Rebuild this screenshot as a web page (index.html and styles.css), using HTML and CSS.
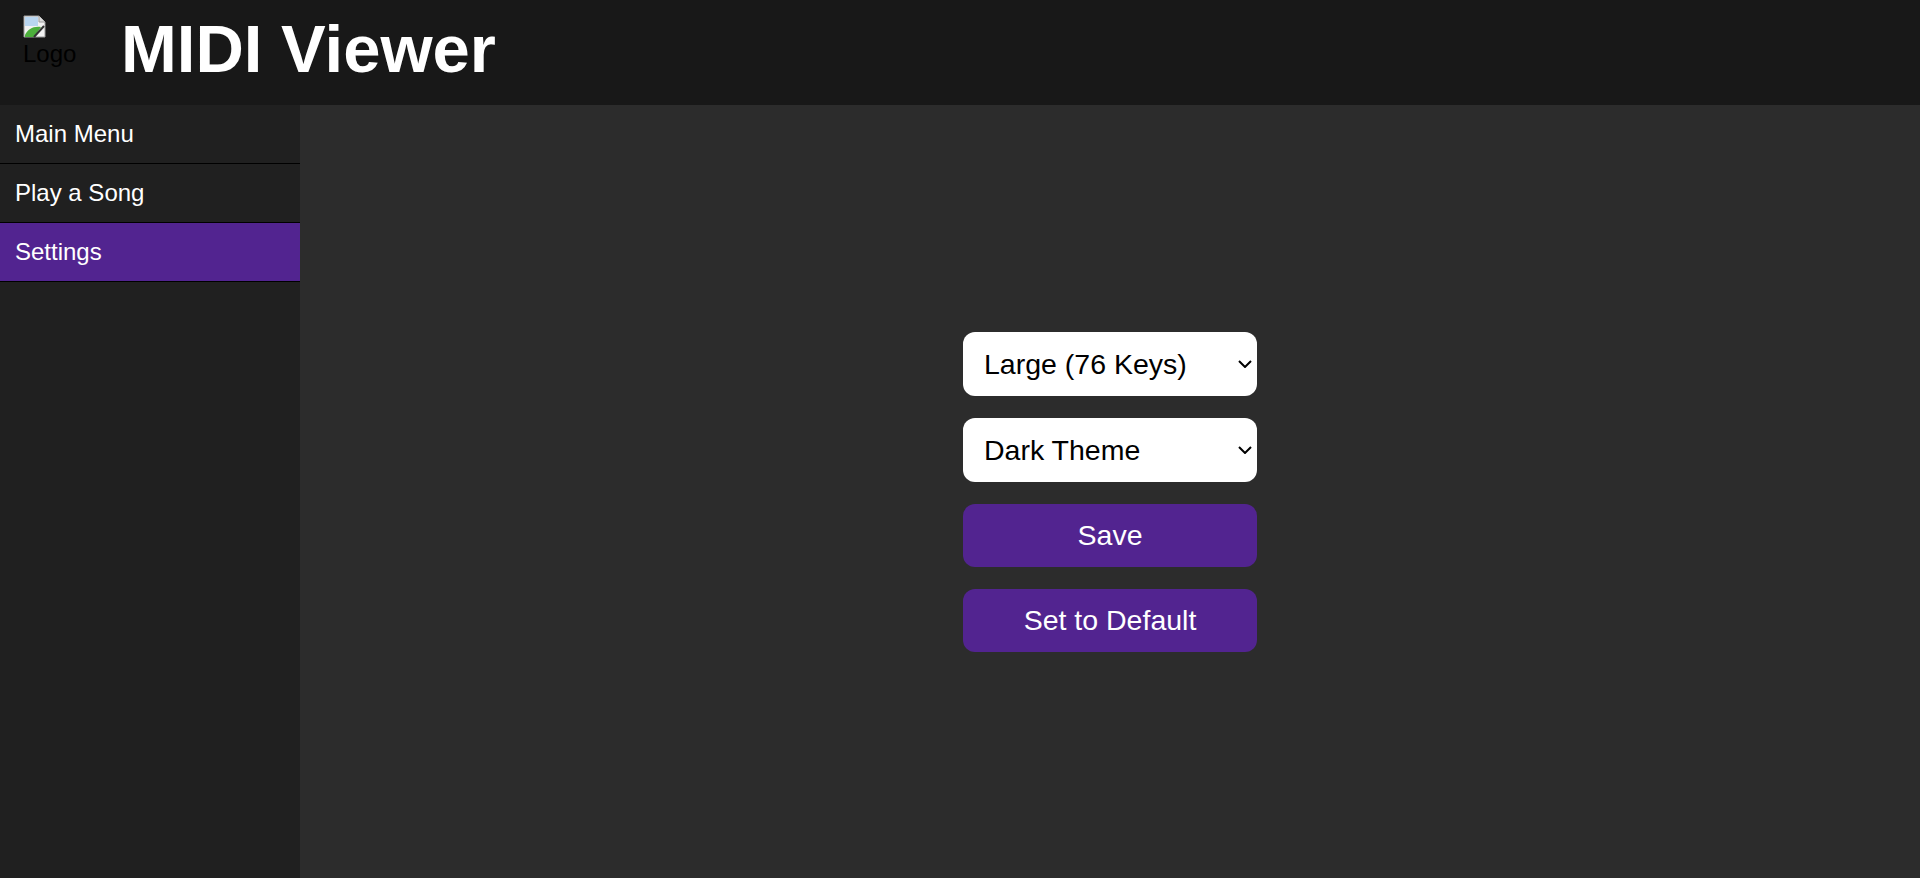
FILE: index.html
```html
<!DOCTYPE html>
<html lang="en">
<head>
<meta charset="utf-8">
<title>MIDI Viewer</title>
<link rel="stylesheet" href="styles.css">
</head>
<body>
<header class="topbar">
  <div class="logo">
    <svg class="logo-icon" width="24" height="23" viewBox="0 0 24 23">
      <path d="M1 1h15l6 6v15H1z" fill="#f2f2f2" stroke="#9a9a9a" stroke-width="1"/>
      <path d="M16 1v6h6" fill="#dcdcdc" stroke="#9a9a9a" stroke-width="1"/>
      <rect x="2" y="2" width="13" height="9" fill="#b9d6f0"/>
      <path d="M2 20c3-6 8-9 16-8l-7 10H2z" fill="#4caf3c"/>
      <path d="M11 22l10-11" stroke="#333" stroke-width="2"/>
    </svg>
    <span class="logo-alt">Logo</span>
  </div>
  <h1 class="title">MIDI Viewer</h1>
</header>
<div class="layout">
  <nav class="sidebar">
    <a class="nav-item" href="#">Main Menu</a>
    <a class="nav-item" href="#">Play a Song</a>
    <a class="nav-item active" href="#">Settings</a>
  </nav>
  <main class="content">
    <form class="settings">
      <select class="field">
        <option>Large (76 Keys)</option>
        <option>Medium (61 Keys)</option>
        <option>Full (88 Keys)</option>
      </select>
      <select class="field">
        <option>Dark Theme</option>
        <option>Light Theme</option>
      </select>
      <button type="button" class="btn">Save</button>
      <button type="button" class="btn">Set to Default</button>
    </form>
  </main>
</div>
</body>
</html>
```

FILE: styles.css
```css
* { box-sizing: border-box; }
html, body { margin: 0; height: 100%; }
body {
  font-family: "Liberation Sans", Arial, sans-serif;
  font-size: 24px;
  color: #fff;
  background: #2c2c2c;
  display: flex;
  flex-direction: column;
  overflow: hidden;
}
.topbar {
  height: 105px;
  flex: 0 0 105px;
  background: #181818;
  display: flex;
  align-items: flex-start;
  padding-left: 23px;
}
.logo {
  margin-top: 15px;
  width: 52px;
  display: flex;
  flex-direction: column;
}
.logo-icon { display: block; }
.logo-alt {
  color: #000;
  font-size: 24px;
  line-height: 1;
  margin-top: 4px;
}
.title {
  margin: 10px 0 0 46px;
  font-size: 67px;
  font-weight: bold;
  line-height: normal;
}
.layout {
  flex: 1;
  display: flex;
  min-height: 0;
}
.sidebar {
  width: 300px;
  flex: 0 0 300px;
  background: #202020;
  display: flex;
  flex-direction: column;
}
.nav-item {
  display: block;
  height: 59px;
  line-height: 58px;
  padding: 0 15px;
  color: #fff;
  text-decoration: none;
  border-bottom: 1px solid #000;
}
.nav-item.active { background: #522490; }
.content {
  flex: 1;
  background: #2c2c2c;
  display: flex;
  align-items: center;
  justify-content: center;
}
.settings {
  width: 294px;
  display: flex;
  flex-direction: column;
  gap: 22px;
}
.field {
  -webkit-appearance: none;
  appearance: none;
  height: 64px;
  border: none;
  border-radius: 12px;
  background-color: #fff;
  background-image: url("data:image/svg+xml,%3Csvg xmlns='http://www.w3.org/2000/svg' width='14' height='8' viewBox='0 0 14 8'%3E%3Cpath d='M1 1l6 6 6-6' fill='none' stroke='%23000' stroke-width='2'/%3E%3C/svg%3E");
  background-repeat: no-repeat;
  background-position: right 5px center;
  color: #000;
  font-family: "Liberation Sans", Arial, sans-serif;
  font-size: 28.5px;
  padding: 0 24px 0 21px;
}
.btn {
  height: 63px;
  border: none;
  border-radius: 12px;
  background: #522490;
  color: #fff;
  font-family: "Liberation Sans", Arial, sans-serif;
  font-size: 28.5px;
  cursor: pointer;
}
```
